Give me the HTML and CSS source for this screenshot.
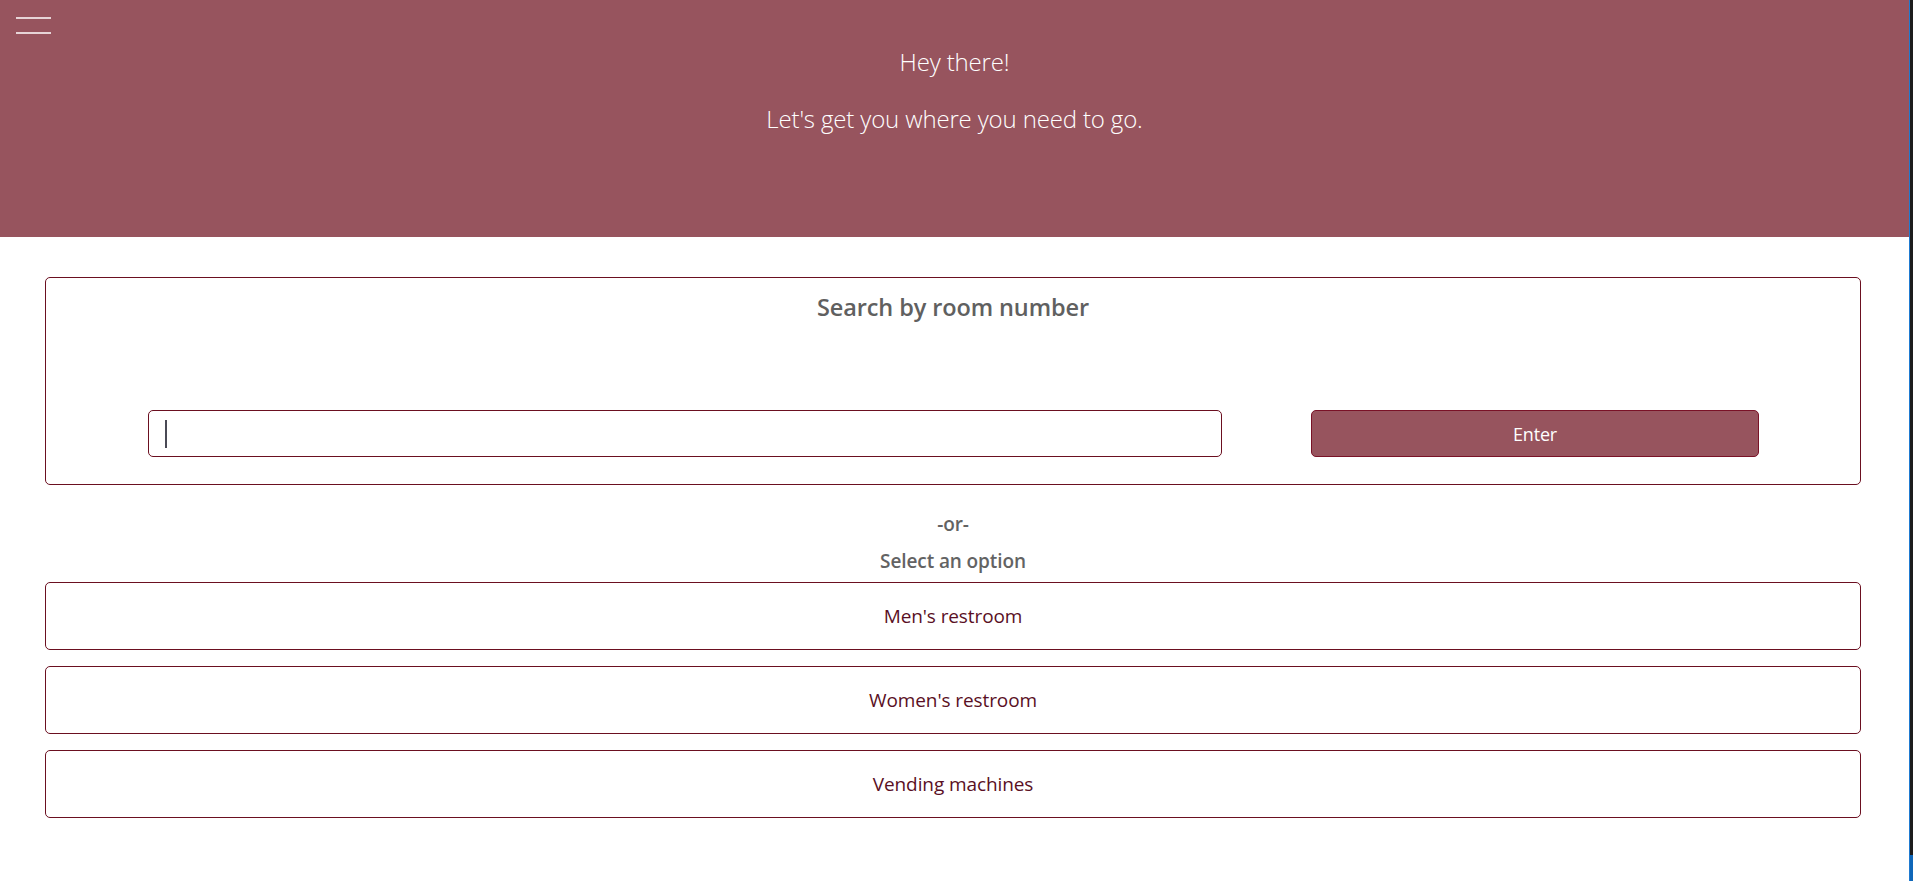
FILE: index.html
```html
<!DOCTYPE html>
<html lang="en">
<head>
<meta charset="utf-8">
<title>Wayfinder</title>
<link rel="stylesheet" href="styles.css">
</head>
<body>
<div class="app">
  <main class="page">
    <header class="hero">
      <button class="menu-toggle" aria-label="Menu">
        <span class="bar"></span>
        <span class="bar"></span>
      </button>
      <p class="hero-line hero-first">Hey there!</p>
      <p class="hero-line hero-second">Let's get you where you need to go.</p>
    </header>
    <section class="content">
      <div class="search-card">
        <h2 class="search-title">Search by room number</h2>
        <div class="search-row">
          <div class="search-input"><span class="caret"></span></div>
          <button class="enter-btn">Enter</button>
        </div>
      </div>
      <p class="or">-or-</p>
      <p class="select-label">Select an option</p>
      <div class="options">
        <button class="option">Men's restroom</button>
        <button class="option">Women's restroom</button>
        <button class="option">Vending machines</button>
      </div>
    </section>
  </main>
  <div class="edge"><div class="edge-bottom"></div></div>
</div>
</body>
</html>
```
FILE: styles.css
```css
html, body {
  margin: 0;
  padding: 0;
  height: 100%;
  background: #ffffff;
}
body {
  font-family: "Open Sans", "Noto Sans", sans-serif;
  overflow: hidden;
}
.app {
  display: flex;
  height: 881px;
}
.page {
  flex: 1;
  min-width: 0;
}
.edge {
  width: 3px;
  border-left: 1px solid #1f7ad0;
  background: #1c1c1c;
  display: flex;
  flex-direction: column;
  justify-content: flex-end;
}
.edge-bottom {
  height: 26px;
  background: #0e66b8;
}
.hero {
  position: relative;
  height: 237px;
  background: #97545e;
  color: #ffffff;
  text-align: center;
  padding-top: 46px;
  box-sizing: border-box;
}
.menu-toggle {
  position: absolute;
  left: 16px;
  top: 17px;
  width: 35px;
  height: 17px;
  padding: 0;
  border: 0;
  background: transparent;
  display: flex;
  flex-direction: column;
  justify-content: space-between;
}
.bar {
  display: block;
  height: 2px;
  width: 35px;
  background: #e7d4d7;
}
.hero-line {
  margin: 0;
  font-weight: 300;
  font-size: 24px;
  line-height: 32px;
  letter-spacing: -0.15px;
}
.hero-second {
  margin-top: 25px;
}
.content {
  padding: 40px 48px 0 45px;
}
.search-card {
  border: 1px solid #6b0f20;
  border-radius: 5px;
  height: 208px;
  box-sizing: border-box;
  padding-top: 13px;
}
.search-title {
  margin: 0;
  text-align: center;
  font-size: 23.5px;
  font-weight: 600;
  line-height: 32px;
  color: #606060;
  letter-spacing: -0.1px;
}
.search-row {
  display: flex;
  align-items: center;
  gap: 89px;
  padding-left: 102px;
  margin-top: 87px;
}
.search-input {
  width: 1074px;
  height: 47px;
  box-sizing: border-box;
  border: 1px solid #6b0f20;
  border-radius: 5px;
  display: flex;
  align-items: center;
  padding-left: 16px;
}
.caret {
  width: 2px;
  height: 28px;
  background: #4a4a55;
}
.enter-btn {
  width: 448px;
  height: 47px;
  box-sizing: border-box;
  background: #97545e;
  border: 1px solid #7a1227;
  border-radius: 5px;
  color: #ffffff;
  font-family: "Open Sans", "Noto Sans", sans-serif;
  font-size: 18px;
  letter-spacing: -0.2px;
}
.or, .select-label {
  margin: 0;
  text-align: center;
  font-weight: 600;
  font-size: 19px;
  color: #636363;
  letter-spacing: -0.1px;
}
.or {
  margin-top: 26px;
  line-height: 26px;
}
.select-label {
  margin-top: 11px;
  line-height: 26px;
}
.options {
  margin-top: 8px;
  display: flex;
  flex-direction: column;
  gap: 16px;
}
.option {
  height: 68px;
  box-sizing: border-box;
  background: #ffffff;
  border: 1px solid #6b0f20;
  border-radius: 5px;
  color: #5a0f24;
  font-family: "Open Sans", "Noto Sans", sans-serif;
  font-size: 19px;
  letter-spacing: -0.1px;
  padding: 0;
}
```
